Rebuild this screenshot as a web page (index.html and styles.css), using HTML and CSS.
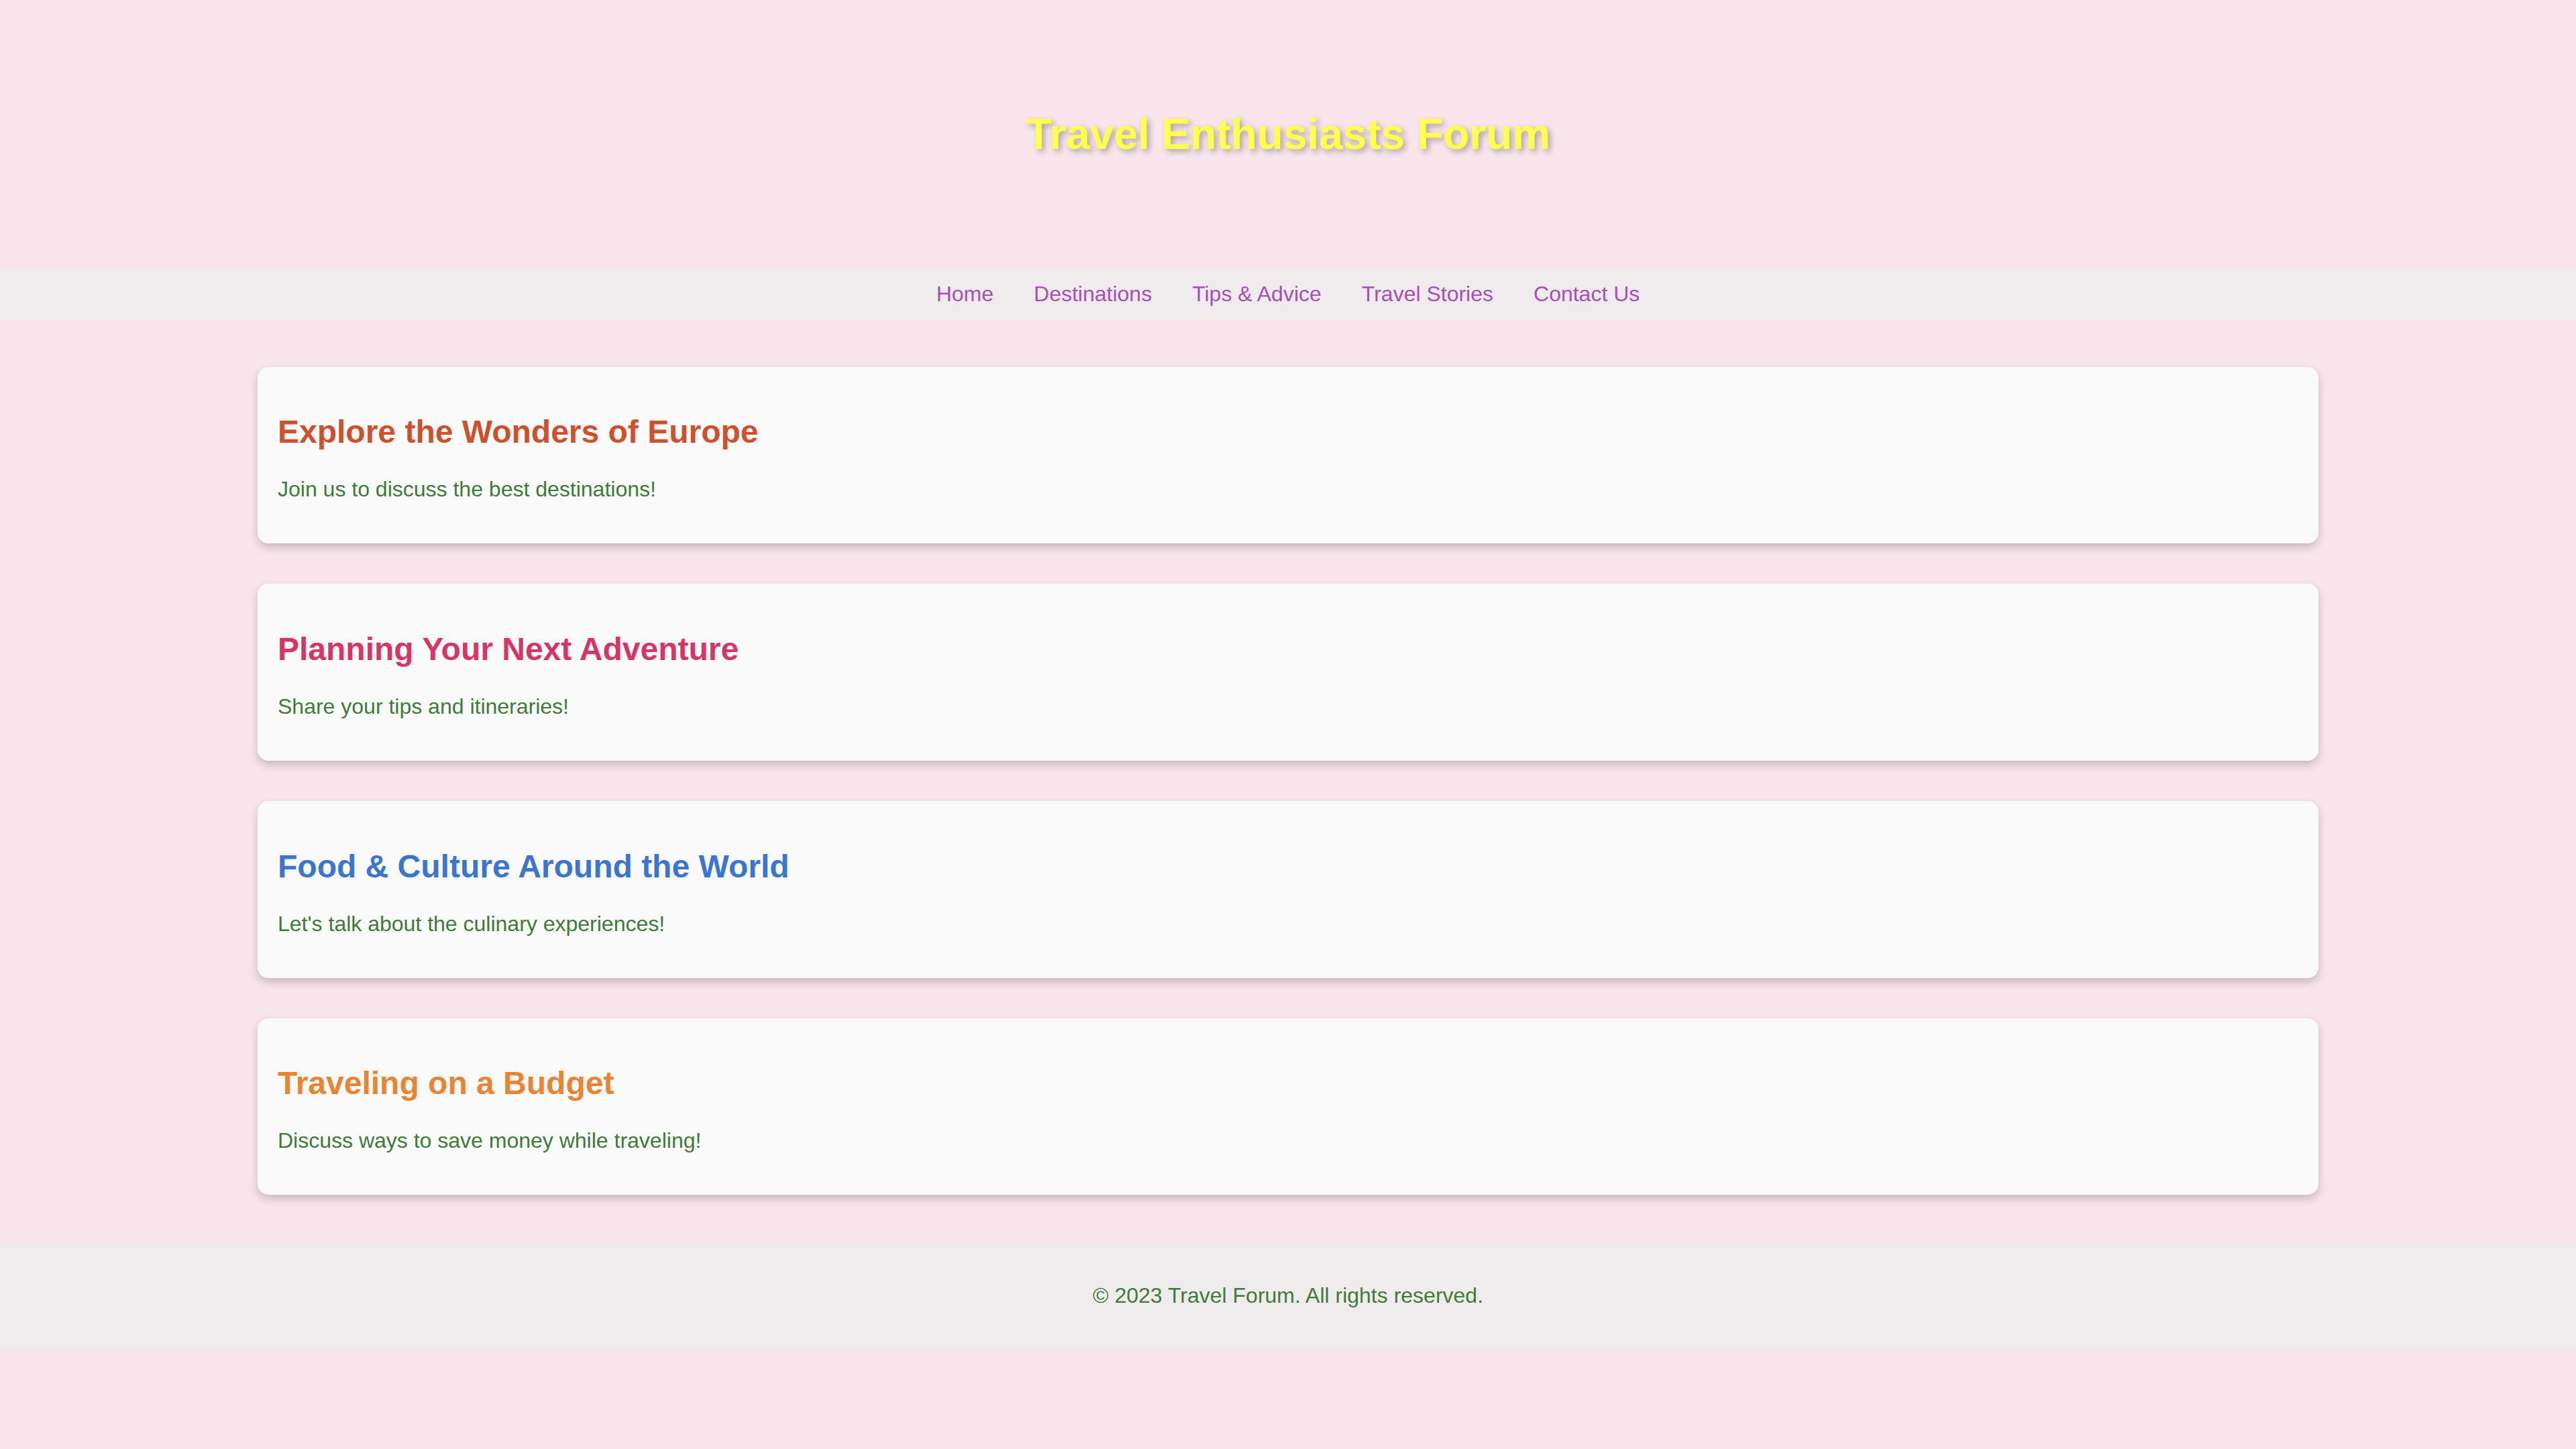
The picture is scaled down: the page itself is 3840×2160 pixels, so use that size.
FILE: index.html
```html
<!DOCTYPE html>
<html lang="en">
<head>
<meta charset="utf-8">
<title>Travel Enthusiasts Forum</title>
<link rel="stylesheet" href="styles.css">
</head>
<body>
<header class="site-header">
  <h1 class="site-title">Travel Enthusiasts Forum</h1>
</header>
<nav class="site-nav">
  <a class="nav-link" href="#">Home</a>
  <a class="nav-link" href="#">Destinations</a>
  <a class="nav-link" href="#">Tips &amp; Advice</a>
  <a class="nav-link" href="#">Travel Stories</a>
  <a class="nav-link" href="#">Contact Us</a>
</nav>
<main class="content">
  <section class="card">
    <h2 class="card-title t-europe">Explore the Wonders of Europe</h2>
    <p class="card-text">Join us to discuss the best destinations!</p>
  </section>
  <section class="card">
    <h2 class="card-title t-plan">Planning Your Next Adventure</h2>
    <p class="card-text">Share your tips and itineraries!</p>
  </section>
  <section class="card">
    <h2 class="card-title t-food">Food &amp; Culture Around the World</h2>
    <p class="card-text">Let's talk about the culinary experiences!</p>
  </section>
  <section class="card">
    <h2 class="card-title t-budget">Traveling on a Budget</h2>
    <p class="card-text">Discuss ways to save money while traveling!</p>
  </section>
</main>
<footer class="site-footer">
  <p class="footer-text">&copy; 2023 Travel Forum. All rights reserved.</p>
</footer>
</body>
</html>
```
FILE: styles.css
```css
html, body {
  margin: 0;
  padding: 0;
}
body {
  background: #f8e5eb;
  font-family: "Liberation Sans", Arial, sans-serif;
  font-size: 32px;
  min-height: 2160px;
}
.site-header {
  padding: 120px 0;
  text-align: center;
}
.site-title {
  margin: 42.88px 0;
  font-size: 64px;
  font-weight: bold;
  color: #ffff4f;
  text-shadow: 4px 4px 8px rgba(0, 0, 0, 0.3);
}
.site-nav {
  background: #f0ecee;
  padding: 20px 0;
  display: flex;
  justify-content: center;
  gap: 60px;
}
.nav-link {
  color: #a84dba;
  text-decoration: none;
  font-size: 32px;
  line-height: 36.8px;
}
.content {
  width: 80%;
  margin: 0 auto;
  padding: 70px 0;
  display: flex;
  flex-direction: column;
  gap: 60px;
}
.card {
  background: #fafafa;
  border-radius: 16px;
  padding: 30px;
  box-shadow: 0 6px 14px rgba(0, 0, 0, 0.2);
}
.card-title {
  margin: 39.84px 0;
  font-size: 48px;
  font-weight: bold;
}
.card-text {
  margin: 32px 0;
  color: #3e7b38;
  font-size: 32px;
}
.t-europe { color: #cd512d; }
.t-plan { color: #d63666; }
.t-food { color: #3a76d0; }
.t-budget { color: #e88432; }
.site-footer {
  background: #f0ecee;
  padding: 30px 0;
  text-align: center;
}
.footer-text {
  margin: 32px 0;
  color: #3e7b38;
}
```
